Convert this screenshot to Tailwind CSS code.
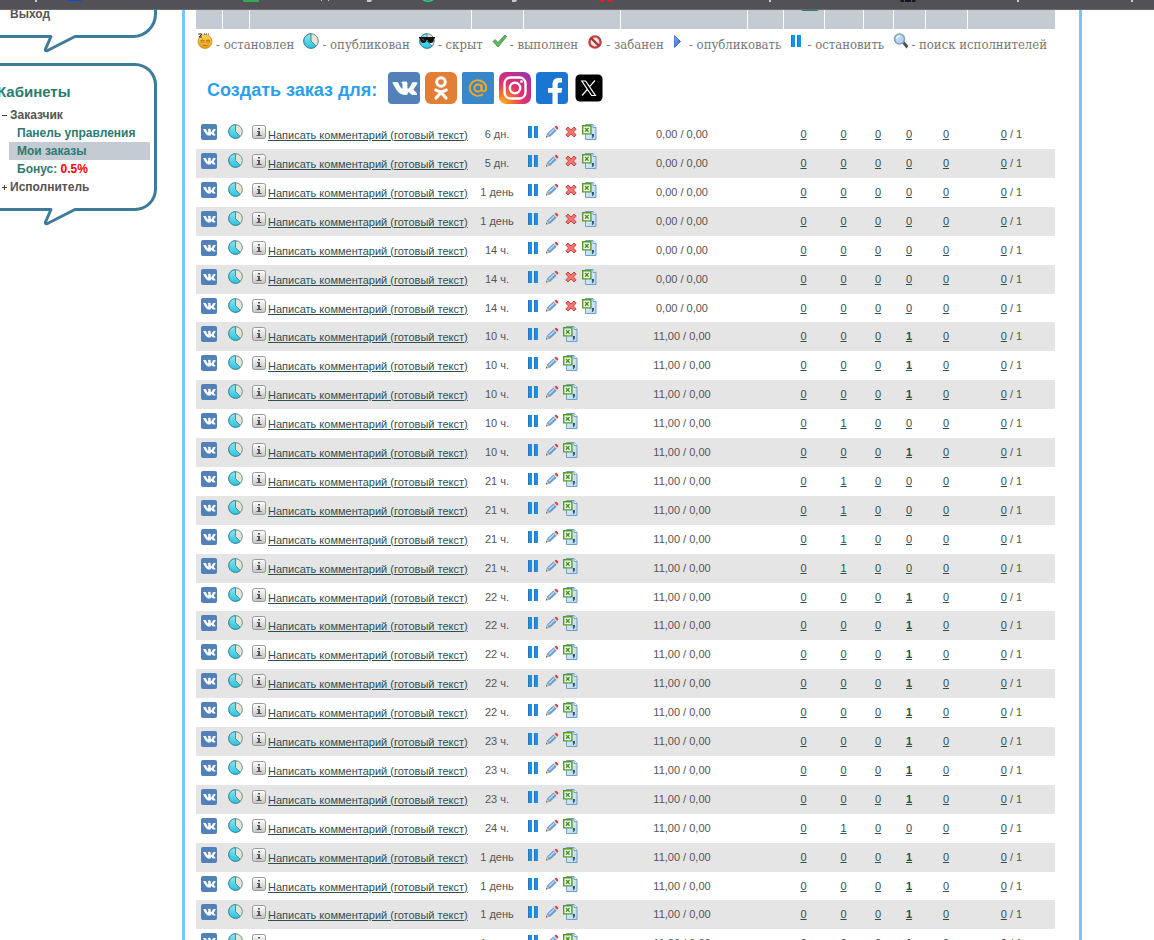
<!DOCTYPE html>
<html lang="ru">
<head>
<meta charset="utf-8">
<title>Мои заказы</title>
<script src="https://cdn.jsdelivr.net/npm/@tailwindcss/browser@4"></script>
</head>
<body class="bg-white font-['Liberation_Sans',Arial,sans-serif] text-[#555555]">

<svg class="absolute size-0" aria-hidden="true">
  <defs>
    <linearGradient id="gPie" x1="0" y1="0" x2="0" y2="1"><stop offset="0" stop-color="#8ce4f2"/><stop offset="1" stop-color="#2cc3e2"/></linearGradient>
    <linearGradient id="gInfo" x1="0" y1="0" x2="0" y2="1"><stop offset="0" stop-color="#ffffff"/><stop offset="1" stop-color="#c4c4c4"/></linearGradient>
    <linearGradient id="gPlay" x1="0" y1="0" x2="1" y2="1"><stop offset="0" stop-color="#8fc4f5"/><stop offset="1" stop-color="#1450b4"/></linearGradient>
    <linearGradient id="gFace" x1="0" y1="0" x2="0" y2="1"><stop offset="0" stop-color="#ffd75a"/><stop offset="1" stop-color="#e69a14"/></linearGradient>
    <linearGradient id="gDoc" x1="0" y1="0" x2="1" y2="1"><stop offset="0" stop-color="#e8f3fb"/><stop offset="1" stop-color="#b5d5ee"/></linearGradient>
    <radialGradient id="gIg" cx="0.1" cy="1" r="1.3"><stop offset="0" stop-color="#ffb52e"/><stop offset="0.2" stop-color="#fa7e2a"/><stop offset="0.5" stop-color="#e2306c"/><stop offset="0.75" stop-color="#c22e8c"/><stop offset="1" stop-color="#8a3ab9"/></radialGradient>
  </defs>
  <symbol id="vk" viewBox="0 0 32 32">
    <rect width="32" height="32" rx="4" fill="#5181b8"/>
    <path fill="#fff" d="M5 10h4.200q.8 0 1.100.8c1 2.600 2.300 5 3.300 5.600.7.300.9-.2.900-1.500v-2.200c0-1.400-.5-1.700-1.500-2q.7-1.200 3.200-1.200h1.700q1.500.2 1.500 1.700v4.600c0 .9.500 1.200 1.200.6 1.200-1.100 2.300-3.200 3.100-5.200q.4-1 1.300-1h3.600q1.200.2.600 1.500c-.8 1.700-2.300 3.600-3.300 4.800q-.7.900.1 1.800c1.100 1.100 2.400 2.200 3 3.400q.5 1.300-1 1.300h-3.300c-1.100 0-1.700-.8-2.900-2-1.200-1.200-2.100-1-2.200.4v.5q-.1 1.100-1.200 1.100h-1.500c-3.600 0-6.300-1.900-8.500-5.200C6.800 15.200 5.400 12.500 4.600 11q-.3-.8.400-1z"/>
  </symbol>
  <symbol id="pie" viewBox="0 0 16 16">
    <circle cx="8" cy="8" r="7.300" fill="#e9e4d2" stroke="#5a9090" stroke-width="1"/>
    <path fill="url(#gPie)" stroke="#2f8390" stroke-width=".9" d="M8 .8V8l5 5.200A7.200 7.200 0 1 1 8 .8z"/>
  </symbol>
  <symbol id="info" viewBox="0 0 14 14">
    <rect x=".5" y=".5" width="13" height="13" rx="2" fill="url(#gInfo)" stroke="#999"/>
    <path fill="#555" d="M6 3h2v1.500H6zM5 6h3v4h1.500v1h-5v-1H6V7H5z"/>
  </symbol>
  <symbol id="pause" viewBox="0 0 12 12">
    <path fill="#1093f5" d="M0 0h4v12H0zM6 0h4v12H6z"/><path fill="#2a74b8" d="M0 0h1v12H0zM6 0h1v12H6z"/>
  </symbol>
  <symbol id="pencil" viewBox="0 0 14 14">
    <path d="M1.500 12l1.200-3.500L8.500 3l2.600 2.600L5.300 11z" fill="#6ba6dd" stroke="#4a7eb5" stroke-width=".8"/>
    <path d="M3.800 9.300L9.200 4.100" stroke="#c2def5" stroke-width="1.300"/>
    <path d="M8.500 2.800l1-1 3 3-1 1z" fill="#d5dbe3"/>
    <path d="M9.500 1.800l1-.9q.6-.4 1.200.1l1.400 1.500q.4.600 0 1.200l-.9 1.100z" fill="#dc4048"/>
    <path d="M1.200 12.300l.9-3 2.400 2.300z" fill="#e6c596"/><path d="M1 12.500l.4-1.500 1.100 1z" fill="#444"/>
  </symbol>
  <symbol id="cross" viewBox="0 0 12 12">
    <path d="M3 1l3 3 3-3 2.200 2.200L8.300 6l2.900 2.800L9 11 6 8l-3 3L.8 8.800 3.700 6 .8 3.200z" fill="#ee7774" stroke="#cf4444" stroke-width="1"/>
  </symbol>
  <symbol id="xls" viewBox="0 0 16 16">
    <path d="M3.500.5h7.500l3 3v12H3.500z" fill="url(#gDoc)" stroke="#6fa0c8"/>
    <path d="M11 .5v3h3" fill="#fff" stroke="#6fa0c8"/>
    <path d="M.7 1.700h8.200v8.200H.7z" fill="#f3faea" stroke="#579a2b" stroke-width="1.400"/>
    <path d="M3 4l3.600 3.800M6.600 4L3 7.800" stroke="#4b8f28" stroke-width="1.300"/>
    <path d="M9.900 10h2v2.500l-1.600 1.700-.6-.5.900-1.200h-.7z" fill="#29507c"/>
  </symbol>
</svg>

<div class="relative flex h-screen overflow-hidden">

  <!-- bottom edge of the bookmarks bar -->
  <div class="absolute inset-x-0 top-0 z-10 h-[10px] border-b border-[#6b6a6e] bg-[#525156]">
    <svg class="block" width="1154" height="4" viewBox="0 0 1154 4" aria-hidden="true">
      <g fill="#c9c9cc"><path d="M35 0h2v2h-2zM321 0h1v1h-1zM328 0h1v1h-1zM367 0h5l-1 2h-4zM512 0h5l-1 2h-4zM769 0h2v2h-2zM1017 0h2v2h-2zM1131 0h2v2h-2z"/></g>
      <path d="M66 0h16q0 1-1.500 1H68q-2 0-2-1z" fill="#0a4be0"/>
      <path d="M243 0h16v1q0 1-1 1h-14q-1 0-1-1z" fill="#34a853"/>
      <path d="M422 0q6 4 12 0h-3q-3 1-6 0z" fill="#25d98b"/>
      <path d="M599 0h4l2 2h-3q-2 0-3-2zM607 0h4l3 2h-4q-2 0-3-2z" fill="#e3202c"/>
      <path d="M900 0h4v2h-3zM905 0h6v2h-6zM912 0h4l-1 2h-3z" fill="#15142a"/>
    </svg>
  </div>

  <aside class="w-[182px] shrink-0 text-xs leading-[18px] font-bold">
    <section class="relative h-[38px] w-[157px] rounded-br-[24px] border-r-[3px] border-b-[3px] border-[#3d7b98] pt-[5px] pl-[10px]">
      <a href="#" class="block">Выход</a>
      <svg class="absolute top-[34px] left-[42px] block" width="36" height="20" viewBox="0 0 36 20" aria-hidden="true">
        <path d="M9.500 0H33v3L5 17z" fill="#fff"/><path d="M0 2.500h9L3.500 15q-.6 2.500 2 1.500L33 2.500h3" fill="none" stroke="#3d7b98" stroke-width="3" stroke-linejoin="round"/>
      </svg>
    </section>

    <nav class="relative mt-[25px] h-[148px] w-[157px] rounded-r-[22px] border-y-[3px] border-r-[3px] border-[#3d7b98] pt-[17px]">
      <h2 class="-ml-[3px] text-[15px] leading-[18px] text-[#2d7a6e]">Кабинеты</h2>
      <a href="#" class="mt-[5px] flex items-center pl-[2px]">
        <svg class="mr-[3px]" width="5" height="5" aria-hidden="true"><path d="M0 2h5v1H0z" fill="#444"/></svg>Заказчик</a>
      <a href="#" class="block pl-[17px] text-[#2d7a6e]">Панель управления</a>
      <a href="#" class="mr-1 ml-[9px] block bg-[#c5cbd3] pl-2 text-[#2d7a6e]">Мои заказы</a>
      <a href="#" class="block pl-[17px] text-[#2d7a6e]">Бонус: <span class="text-[#ff0000]">0.5%</span></a>
      <a href="#" class="flex items-center pl-[2px]">
        <svg class="mr-[3px]" width="5" height="5" aria-hidden="true"><path d="M0 2h5v1H0zM2 0h1v5H2z" fill="#444"/></svg>Исполнитель</a>
      <svg class="absolute top-[141px] left-[42px] block" width="36" height="20" viewBox="0 0 36 20" aria-hidden="true">
        <path d="M9.500 0H33v3L5 17z" fill="#fff"/><path d="M0 2.500h9L3.500 15q-.6 2.500 2 1.500L33 2.500h3" fill="none" stroke="#3d7b98" stroke-width="3" stroke-linejoin="round"/>
      </svg>
    </nav>
  </aside>

  <main class="mr-[72px] min-w-0 flex-1 border-x-[3px] border-[#78c6fa] pr-6 pl-[11px]">
    <table class="w-full table-fixed border-separate border-spacing-0 text-[11px] leading-[13px]">
      <colgroup>
        <col class="w-[27px]"><col class="w-[27px]"><col class="w-[222px]"><col class="w-[52px]"><col class="w-[97px]"><col class="w-[127px]"><col class="w-[36px]"><col class="w-[41px]"><col class="w-[39px]"><col class="w-[30px]"><col class="w-[32px]"><col class="w-[42px]"><col class="w-[87px]">
      </colgroup>
      <thead>
        <tr class="h-[29px] bg-[#c5cbd3]" id="head"></tr>
      </thead>
      <tbody>
        <tr>
          <td colspan="13" class="h-[31px] p-0 align-top">
            <ul class="flex justify-between pt-1 pr-2 pl-[1px] font-['DejaVu_Serif_Condensed','DejaVu_Serif',serif] text-[13px] leading-[24px] whitespace-nowrap text-[#777777]">
              <li class="flex gap-[3px]"><svg width="16" height="16" viewBox="0 0 16 16" aria-hidden="true"><circle cx="8" cy="8.500" r="7" fill="url(#gFace)" stroke="#c98a1c" stroke-width=".8"/><path d="M1 1h4L2 4h3" fill="none" stroke="#333"/><path d="M7 1h1M9 1h1M11 1h1" stroke="#444"/><path d="M3.500 8q2-2 4 0M9 8q2-2 4 0" stroke="#a46a10" fill="none"/><path d="M3.500 9h4M9 9h4M6 12.500h4.500" stroke="#b87d1c"/></svg>- остановлен</li>
              <li class="flex gap-[3px]"><svg width="16" height="16" aria-hidden="true"><use href="#pie"/></svg>- опубликован</li>
              <li class="flex gap-[3px]"><svg width="16" height="16" viewBox="0 0 16 16" aria-hidden="true"><use href="#pie" width="16" height="16"/><path d="M0 4h16v1.500h-1q0 4.500-3.500 4.500Q8.600 9.500 8.500 7h-1q-.2 3-3 3Q1.300 10 1 5.500H0z" fill="#111"/><path d="M3 5.500l2 2" stroke="#777"/></svg>- скрыт</li>
              <li class="flex gap-[2px]"><svg width="16" height="16" viewBox="0 0 16 16" aria-hidden="true"><path d="M1 8.500L3 6.500l3 3L13 2l1.700 1.500L6 14z" fill="#5cb85c" stroke="#3a8f43" stroke-width=".8"/></svg>- выполнен</li>
              <li class="flex gap-[3px]"><svg width="16" height="16" viewBox="0 0 16 16" aria-hidden="true"><circle cx="8" cy="9" r="5.600" fill="#f3e9e9" stroke="#c2403f" stroke-width="2.400"/><path d="M4 5l8 8" stroke="#a83232" stroke-width="2.400"/></svg>- забанен</li>
              <li class="flex gap-[2px]"><svg width="14" height="16" viewBox="0 0 14 16" aria-hidden="true"><path d="M1.500 2.500l6 6-6 6z" fill="url(#gPlay)" stroke="#2a62b8" stroke-width=".8"/></svg>- опубликовать</li>
              <li class="flex gap-[3px]"><svg width="14" height="16" viewBox="0 0 14 16" aria-hidden="true"><use href="#pause" x="1" y="2" width="12" height="12"/></svg>- остановить</li>
              <li class="flex gap-[2px]"><svg width="16" height="16" viewBox="0 0 16 16" aria-hidden="true"><path d="M9 10l2-2 4.500 5-2 2.500z" fill="#50505a"/><circle cx="6.500" cy="6" r="5" fill="#b4d6f7" stroke="#8a9bc0" stroke-width="1.600"/><path d="M3.500 5.500q1-2.500 3.500-2.500" stroke="#fff" fill="none" stroke-width="1.300"/></svg>- поиск исполнителей</li>
            </ul>
          </td>
        </tr>
        <tr>
          <td colspan="13" class="h-[60px] p-0 pt-3 align-top">
            <div class="flex items-center gap-[5px] pl-[11px]">
              <h1 class="mr-[6px] pt-1 text-lg leading-7 font-bold text-[#2b9fee]">Создать заказ для:</h1>
              <a href="#" aria-label="ВКонтакте"><svg class="block" width="32" height="32"><use href="#vk"/></svg></a>
              <a href="#" aria-label="Одноклассники"><svg class="block" width="32" height="32" viewBox="0 0 32 32"><rect width="32" height="32" rx="6" fill="#e27e35"/><circle cx="16" cy="10" r="4.300" fill="none" stroke="#fff" stroke-width="3"/><path d="M10.800 18q5.200 3.200 10.400 0M16 20.500L11 26M16 20.500L21 26" fill="none" stroke="#fff" stroke-width="3.200" stroke-linecap="round"/></svg></a>
              <a href="#" aria-label="Мой мир"><svg class="block" width="32" height="32" viewBox="0 0 32 32"><rect width="32" height="32" rx="1.500" fill="#3788c8"/><circle cx="16" cy="16" r="3.600" fill="none" stroke="#f2a526" stroke-width="2"/><path d="M19.600 12.200V17q.3 2.400 2.300 2.400 2.300-.4 2.300-3.400a8.200 7.800 0 1 0-3.200 6.200" fill="none" stroke="#f2a526" stroke-width="1.900"/></svg></a>
              <a href="#" aria-label="Instagram"><svg class="block" width="32" height="32" viewBox="0 0 32 32"><rect width="32" height="32" rx="7" fill="url(#gIg)"/><rect x="5.500" y="5.500" width="21" height="21" rx="6" fill="none" stroke="#fff" stroke-width="2.400"/><circle cx="16" cy="16" r="5.200" fill="none" stroke="#fff" stroke-width="2.400"/><circle cx="22.500" cy="9.600" r="1.400" fill="#fff"/></svg></a>
              <a href="#" aria-label="Facebook"><svg class="block" width="32" height="32" viewBox="0 0 32 32"><rect width="32" height="32" rx="4" fill="#1976d2"/><path d="M16.500 32V20.700H12V16h4.500v-3.500C16.500 8 19 6 22.500 6H26v4.500h-2.300q-2 0-2 2V16h4.500l-.7 4.700h-3.800V32z" fill="#fff"/></svg></a>
              <a href="#" aria-label="X"><svg class="block" width="32" height="32" viewBox="0 0 32 32"><rect x="2.500" y="2.500" width="27" height="27" rx="4.500" fill="#000"/><path d="M8.800 9h3.800l9.800 14.500h-3.800zM22 8.500l-5.400 6.200M14.700 17L9 23.500" fill="none" stroke="#fff" stroke-width="1.200"/></svg></a>
            </div>
          </td>
        </tr>
      </tbody>
      <tbody id="orders"></tbody>
    </table>
  </main>
</div>

<script>
  const head = document.getElementById('head');
  for (let i = 0; i < 13; i++) {
    const mark = i === 7 ? '<div class="mr-1 ml-auto h-[11px] w-5 rounded-b-sm bg-[#2d7a6e]"></div>' : '';
    head.insertAdjacentHTML('beforeend', `<th scope="col" class="border-r border-white p-0 align-top last:border-r-0">${mark}</th>`);
  }

  // [age, one letter per row]; n = no budget, d = done, w = in work
  const groups = [
    ['6 дн.', 'n'], ['5 дн.', 'n'], ['1 день', 'nn'], ['14 ч.', 'nnn'],
    ['10 ч.', 'ddd'], ['10 ч.', 'wd'], ['21 ч.', 'wwww'], ['22 ч.', 'ddddd'],
    ['23 ч.', 'ddd'], ['24 ч.', 'w'], ['1 день', 'dddd']
  ];
  const orders = groups.flatMap(([age, states]) => [...states].map(state => ({ age, state })));
  const icon = (id, w, h, cls = '') => `<svg class="block ${cls}" width="${w}" height="${h}" aria-hidden="true"><use href="#${id}"/></svg>`;
  const link = (v, cls = '') => `<a href="#" class="text-[#2f4f4f] underline ${cls}">${v}</a>`;
  const btn = (label, svg) => `<button type="button" aria-label="${label}" class="block">${svg}</button>`;

  document.getElementById('orders').innerHTML = orders.map(({ age, state }, i) => {
    const counts = [0, state === 'w' ? 1 : 0, 0, state === 'd' ? 1 : 0, 0];
    return `<tr class="${i % 10 === 6 ? 'h-[28px]' : 'h-[29px]'} even:bg-[#e5e5e5] text-center">
      <td class="p-0 pt-1 pl-[5px] align-top">${icon('vk', 16, 16)}</td>
      <td class="p-0 pt-1 pl-[5px] align-top">${icon('pie', 15, 15)}</td>
      <td class="p-0 pt-[5px] pl-[2px] align-top"><div class="flex gap-[2px] whitespace-nowrap">${icon('info', 14, 14)}<div class="pt-1">${link('Написать комментарий (готовый текст)')}</div></div></td>
      <td class="p-0 pr-[2px]">${age}</td>
      <td class="p-0 pt-1 pl-1 align-top"><div class="flex items-start">
        ${btn('Остановить', icon('pause', 12, 12, 'mt-[2px] mr-[5px]'))}
        ${btn('Изменить', icon('pencil', 14, 14, 'mt-[1px] mr-1'))}
        ${state === 'n' ? btn('Удалить', icon('cross', 12, 12, 'mt-[2px] mr-[5px] ml-[2px]')) : ''}
        ${btn('Экспорт', icon('xls', 16, 16))}
      </div></td>
      <td class="p-0 pr-[5px]">${state === 'n' ? '0,00' : '11,00'} / 0,00</td>
      <td class="p-0"></td>
      ${counts.map((v, c) => `<td class="p-0 pr-[2px]">${link(v, v && c === 3 ? 'font-bold' : '')}</td>`).join('')}
      <td class="p-0">${link(0)} / 1</td>
    </tr>`;
  }).join('');
</script>
</body>
</html>
